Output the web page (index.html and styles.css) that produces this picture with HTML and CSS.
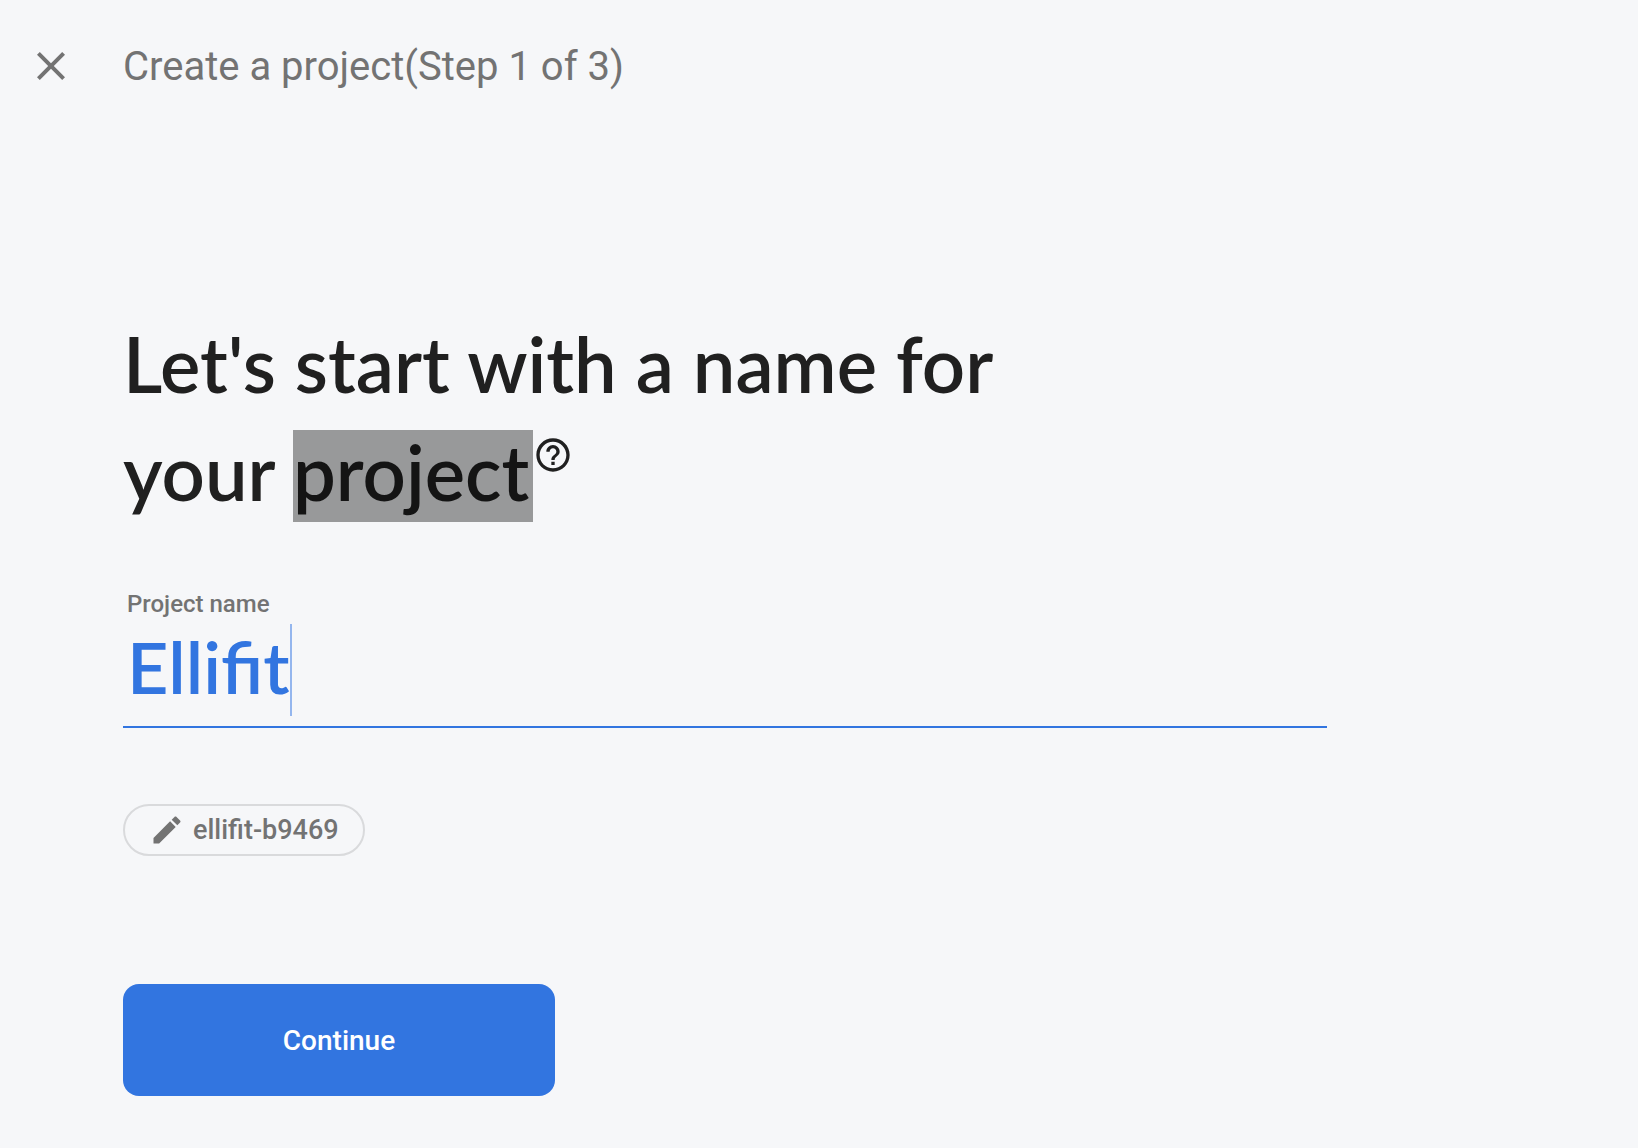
FILE: index.html
```html
<!DOCTYPE html>
<html lang="en">
<head>
  <meta charset="UTF-8" />
  <meta name="viewport" content="width=device-width, initial-scale=1.0"/>
  <title>Create a project</title>
  <link rel="stylesheet" href="styles.css">
</head>
<body>

  <!-- Top bar -->
  <header class="topbar">
    <button type="button" class="icon-btn" aria-label="Close">
      <svg viewBox="0 0 24 24" width="48" height="48"><path d="M19 6.41L17.59 5 12 10.59 6.41 5 5 6.41 10.59 12 5 17.59 6.41 19 12 13.41 17.59 19 19 17.59 13.41 12z"/></svg>
    </button>
    <span class="topbar-title">Create a project(Step 1 of 3)</span>
  </header>

  <!-- Project form -->
  <main class="content">
    <h1>Let's start with a name for<br>your <mark>project</mark><button type="button" class="icon-btn help-btn" aria-label="Help">
      <svg viewBox="0 0 24 24" width="40" height="40"><path d="M11 18h2v-2h-2v2zm1-16C6.48 2 2 6.48 2 12s4.480 10 10 10 10-4.480 10-10S17.520 2 12 2zm0 18c-4.410 0-8-3.590-8-8s3.590-8 8-8 8 3.590 8 8-3.590 8-8 8zm0-14c-2.210 0-4 1.790-4 4h2c0-1.100.9-2 2-2s2 .9 2 2c0 2-3 1.750-3 5h2c0-2.250 3-2.500 3-5 0-2.210-1.790-4-4-4z"/></svg>
    </button></h1>

    <form>
      <label for="projectName">Project name</label>
      <div class="field">
        <input type="text" id="projectName" value="Ellifit" autocomplete="off" spellcheck="false" />
        <span class="caret"></span>
      </div>

      <button type="button" class="chip">
        <svg viewBox="0 0 24 24" width="36" height="36"><path d="M3 17.250V21h3.750L17.810 9.940l-3.750-3.750L3 17.250zM20.710 7.040c.39-.39.39-1.020 0-1.410l-2.340-2.340c-.39-.39-1.020-.39-1.410 0l-1.830 1.830 3.750 3.750 1.830-1.830z"/></svg>
        ellifit-b9469
      </button>

      <button type="submit" class="continue-btn">Continue</button>
    </form>
  </main>

</body>
</html>
```

FILE: styles.css
```css
* {
  box-sizing: border-box;
}

body {
  margin: 0;
  font-family: Roboto, sans-serif;
  background: #f6f7f9;
  color: #202020;
}

button {
  font-family: inherit;
  cursor: pointer;
}

svg {
  display: block;
  fill: currentColor;
}

.icon-btn {
  padding: 0;
  border: none;
  background: none;
  color: inherit;
}

.topbar {
  display: flex;
  align-items: center;
  gap: 48px;
  height: 132px;
  padding: 0 27px;
  color: #737373;
}

.topbar-title {
  font-size: 40px;
}

.content {
  max-width: 1327px;
  padding: 178px 0 52px 123px;
}

h1 {
  margin: 0;
  font-family: Lato, sans-serif;
  font-size: 76px;
  font-weight: 600;
  line-height: 108px;
}

mark {
  display: inline-block;
  padding: 0 4px 8px 0;
  line-height: 84px;
  background: #98999a;
  color: #141414;
}

.help-btn {
  vertical-align: 26px;
}

form {
  display: flex;
  flex-direction: column;
  align-items: flex-start;
}

label {
  margin-top: 62px;
  padding-left: 4px;
  font-size: 24px;
  font-weight: 500;
  line-height: 32px;
  color: #737373;
}

.field {
  display: flex;
  align-items: center;
  width: 100%;
  padding: 4px 0 10px 4px;
  border-bottom: 2px solid #3275e0;
}

.field input {
  field-sizing: content;
  height: 92px;
  padding: 0 0 8px;
  border: none;
  outline: none;
  background: none;
  font-family: Lato, sans-serif;
  font-size: 72px;
  font-weight: 600;
  color: #3275e0;
}

.caret {
  width: 2px;
  height: 92px;
  background: #94b6ee;
}

.chip {
  display: flex;
  align-items: center;
  gap: 8px;
  height: 52px;
  margin-top: 76px;
  padding: 0 24px;
  border: 2px solid #d9dadc;
  border-radius: 26px;
  background: none;
  font-size: 27px;
  font-weight: 500;
  color: #737373;
}

.continue-btn {
  width: 432px;
  height: 112px;
  margin-top: 128px;
  border: none;
  border-radius: 16px;
  background: #3275e0;
  font-size: 28px;
  font-weight: 500;
  color: #fff;
}
```
